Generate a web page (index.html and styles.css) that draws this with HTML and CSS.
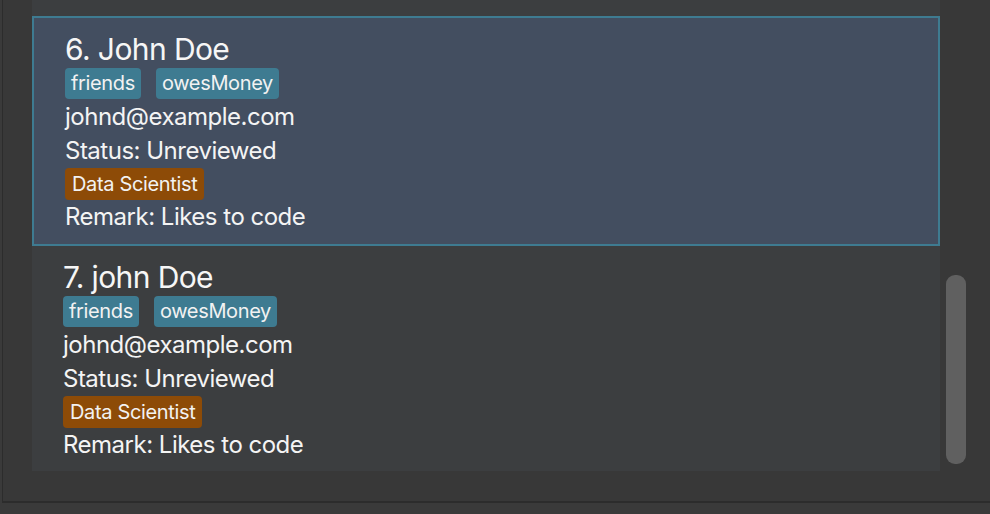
FILE: index.html
```html
<!DOCTYPE html>
<html>
<head>
<meta charset="utf-8">
<link rel="stylesheet" href="styles.css">
</head>
<body>
<div class="window">
  <div class="panel">
    <div class="list">
      <div class="card card-tail"></div>
      <div class="card selected">
        <div class="name">6. John Doe</div>
        <div class="tags">
          <span class="tag">friends</span>
          <span class="tag">owesMoney</span>
        </div>
        <div class="line">johnd@example.com</div>
        <div class="line">Status: Unreviewed</div>
        <div class="tags">
          <span class="tag role">Data Scientist</span>
        </div>
        <div class="line">Remark: Likes to code</div>
      </div>
      <div class="card">
        <div class="name">7. john Doe</div>
        <div class="tags">
          <span class="tag">friends</span>
          <span class="tag">owesMoney</span>
        </div>
        <div class="line">johnd@example.com</div>
        <div class="line">Status: Unreviewed</div>
        <div class="tags">
          <span class="tag role">Data Scientist</span>
        </div>
        <div class="line">Remark: Likes to code</div>
      </div>
    </div>
    <div class="scrollbar"><div class="thumb"></div></div>
  </div>
</div>
</body>
</html>
```

FILE: styles.css
```css
html, body {
  margin: 0;
  padding: 0;
}
body {
  background: #3a3a3a;
  font-family: Inter, "Noto Sans", sans-serif;
  color: #f4f4f4;
  width: 990px;
  height: 514px;
  overflow: hidden;
}
.window {
  padding-left: 2px;
}
.panel {
  box-sizing: border-box;
  height: 503px;
  background: #383838;
  border-left: 1px solid #2c2c2c;
  border-bottom: 2px solid #2c2c2c;
  padding-left: 29px;
  display: flex;
}
.list {
  width: 908px;
  height: 471px;
  overflow: hidden;
  background: #3c3e40;
  display: flex;
  flex-direction: column;
  flex-shrink: 0;
}
.card {
  box-sizing: border-box;
  flex-shrink: 0;
  padding: 12px 0 0 31px;
  height: 230px;
  display: flex;
  flex-direction: column;
  align-items: flex-start;
}
.card-tail {
  height: 16px;
  padding: 0;
}
.card.selected {
  background: #434e60;
  border: 2px solid #3e7b91;
  padding-left: 29px;
}
.card.selected .name,
.card.selected .tags,
.card.selected .line {
  margin-left: 2px;
}
.name {
  font-size: 30px;
  line-height: 38px;
  letter-spacing: -0.6px;
  color: #f6f6f6;
  white-space: nowrap;
}
.tags {
  display: flex;
  gap: 15px;
  height: 32px;
  align-items: flex-start;
}
.tag {
  background: #3e7b91;
  border-radius: 4px;
  font-size: 20px;
  letter-spacing: -0.35px;
  line-height: 31px;
  height: 31px;
  padding: 0 6px;
  color: #f2f2f2;
  white-space: nowrap;
}
.tag.role {
  background: #8d4b07;
  height: 32px;
  line-height: 32px;
  padding: 0 7px;
}
.line {
  font-size: 24px;
  line-height: 34px;
  letter-spacing: -0.5px;
  white-space: nowrap;
}
.scrollbar {
  width: 50px;
  flex-shrink: 0;
}
.thumb {
  margin: 275px 0 0 6px;
  width: 20px;
  height: 189px;
  border-radius: 9px;
  background: #606060;
}
```
